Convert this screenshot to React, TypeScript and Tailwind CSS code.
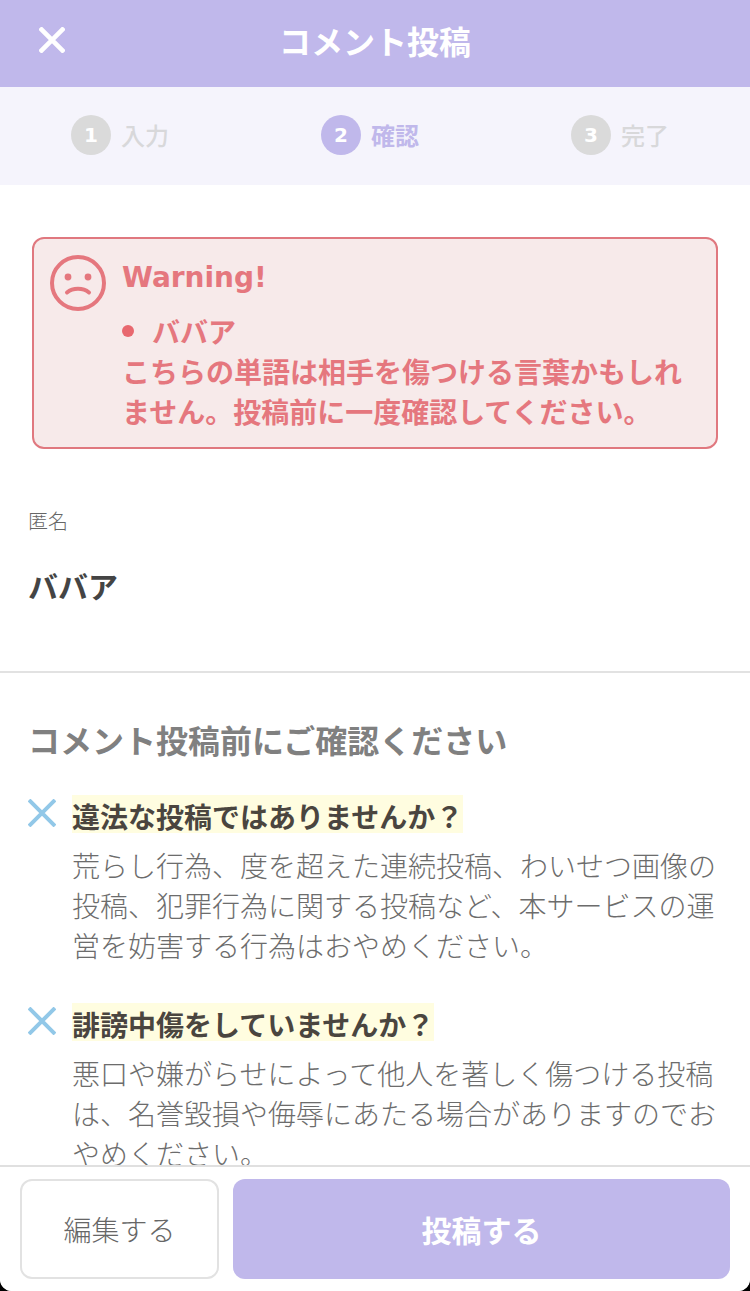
interface Step {
  number: number;
  label: string;
  active: boolean;
}

interface CheckItem {
  title: string;
  description: string;
}

const STEPS: Step[] = [
  { number: 1, label: "入力", active: false },
  { number: 2, label: "確認", active: true },
  { number: 3, label: "完了", active: false },
];

const CHECK_ITEMS: CheckItem[] = [
  {
    title: "違法な投稿ではありませんか？",
    description:
      "荒らし行為、度を超えた連続投稿、わいせつ画像の投稿、犯罪行為に関する投稿など、本サービスの運営を妨害する行為はおやめください。",
  },
  {
    title: "誹謗中傷をしていませんか？",
    description:
      "悪口や嫌がらせによって他人を著しく傷つける投稿は、名誉毀損や侮辱にあたる場合がありますのでおやめください。",
  },
];

function CrossIcon({ className }: { className: string }) {
  return (
    <svg
      viewBox="0 0 28 28"
      className={className}
      fill="none"
      stroke="currentColor"
      strokeWidth={4}
      aria-hidden="true"
    >
      <path d="M1 1 27 27M27 1 1 27" />
    </svg>
  );
}

function SadFaceIcon() {
  return (
    <svg viewBox="0 0 56 56" className="size-14 shrink-0" fill="none" aria-hidden="true">
      <circle cx="28" cy="28" r="26" stroke="currentColor" strokeWidth={4} />
      <circle cx="18" cy="22" r="3.4" fill="currentColor" />
      <circle cx="38" cy="22" r="3.4" fill="currentColor" />
      <path
        d="M17 37.5c6-5 16-5 22 0"
        stroke="currentColor"
        strokeWidth={4}
        strokeLinecap="round"
      />
    </svg>
  );
}

function Header() {
  return (
    <header className="grid h-[87px] shrink-0 grid-cols-[64px_1fr_64px] items-center bg-[#c0b8eb] px-5 pb-2 text-white">
      <button type="button" aria-label="閉じる" className="flex size-16 items-center justify-center">
        <CrossIcon className="size-6.5 stroke-[5]" />
      </button>
      <h1 className="text-center text-[32px] leading-[48px] font-bold">コメント投稿</h1>
    </header>
  );
}

function Steps() {
  return (
    <ol className="grid h-[98px] shrink-0 grid-cols-3 items-center bg-[#f5f4fc] pb-0.5">
      {STEPS.map((s) => (
        <li
          key={s.number}
          aria-current={s.active ? "step" : undefined}
          className={`flex items-center justify-center gap-2.5 pr-2.5 text-2xl ${
            s.active ? "font-bold text-[#c0b8eb]" : "font-medium text-[#d8d8da]"
          }`}
        >
          <span
            className={`flex size-10 items-center justify-center rounded-full font-['DejaVu_Sans',sans-serif] text-xl font-bold text-white ${
              s.active ? "bg-[#c0b8eb]" : "bg-[#dadada]"
            }`}
          >
            {s.number}
          </span>
          {s.label}
        </li>
      ))}
    </ol>
  );
}

function Warning() {
  return (
    <div
      role="alert"
      className="mx-8 mt-13 flex gap-4 rounded-xl border-2 border-[#e0787f] bg-[#f7eaea] p-4 text-[28px] leading-10 font-bold text-[#e5777e]"
    >
      <SadFaceIcon />
      <div className="min-w-0 flex-1">
        <p className="mb-2.5 font-['DejaVu_Sans',sans-serif] leading-[46px]">Warning!</p>
        <ul>
          <li className="flex items-center gap-4.5">
            <span className="size-3 rounded-full bg-[#e8686f]" />
            ババア
          </li>
        </ul>
        <p>こちらの単語は相手を傷つける言葉かもしれません。投稿前に一度確認してください。</p>
      </div>
    </div>
  );
}

export default function App() {
  return (
    <div className="h-screen bg-black font-['Noto_Sans_CJK_JP',sans-serif]" lang="ja">
      <div className="flex h-full flex-col overflow-hidden rounded-b-xl bg-white">
        <Header />
        <Steps />

        <main className="min-h-0 flex-1 overflow-y-auto [scrollbar-width:none]">
          <Warning />

          <section className="border-b-2 border-[#e2e2e2] px-7 pt-14 pb-16">
            <p className="text-xl leading-8 font-light text-[#666666]">匿名</p>
            <p className="mt-6.5 text-[30px] leading-11 font-bold text-[#444444]">ババア</p>
          </section>

          <section className="px-7 pt-10.5 pb-10">
            <h2 className="text-[32px] leading-[48px] font-bold text-[#808080]">
              コメント投稿前にご確認ください
            </h2>
            <ul className="mt-8 space-y-9.5">
              {CHECK_ITEMS.map((item) => (
                <li key={item.title} className="flex gap-4">
                  <CrossIcon className="mt-1 size-7 shrink-0 text-[#92c8e8]" />
                  <div className="min-w-0 flex-1 text-[28px] leading-10">
                    <h3 className="mb-3 w-fit bg-[#fffde0] pt-1 leading-[34px] font-bold text-[#4a453f]">
                      {item.title}
                    </h3>
                    <p className="font-light text-[#6c6c6c]">{item.description}</p>
                  </div>
                </li>
              ))}
            </ul>
          </section>
        </main>

        <footer className="grid shrink-0 grid-cols-[2fr_5fr] gap-3.5 border-t-2 border-[#e0e0e0] bg-white px-5 py-3">
          <button
            type="button"
            className="h-25 rounded-xl border-2 border-[#e2e2e2] text-[28px] font-light text-[#666666]"
          >
            編集する
          </button>
          <button
            type="button"
            className="h-25 rounded-xl bg-[#c0b8eb] text-[30px] font-bold text-white"
          >
            投稿する
          </button>
        </footer>
      </div>
    </div>
  );
}
